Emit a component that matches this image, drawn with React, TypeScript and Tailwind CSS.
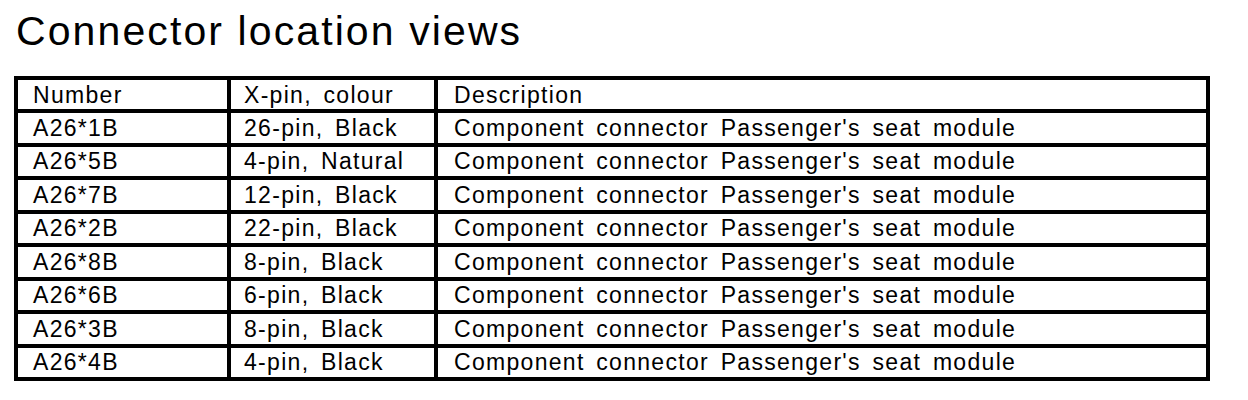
const rows = [
  { number: "A26*1B", pin: "26-pin, Black" },
  { number: "A26*5B", pin: "4-pin, Natural" },
  { number: "A26*7B", pin: "12-pin, Black" },
  { number: "A26*2B", pin: "22-pin, Black" },
  { number: "A26*8B", pin: "8-pin, Black" },
  { number: "A26*6B", pin: "6-pin, Black" },
  { number: "A26*3B", pin: "8-pin, Black" },
  { number: "A26*4B", pin: "4-pin, Black" },
];

const desc = "Component connector Passenger's seat module";

// Connector location table
export default function App() {
  return (
    <div className="w-[1248px] h-[400px] bg-white text-black font-['Liberation_Sans',Arial,sans-serif]">
      <h1 className="pl-[16px] pt-[9px] text-[41px] leading-[44px] tracking-[2.1px]">
        Connector location views
      </h1>
      <table className="ml-[14px] mt-[23px] w-[1196px] border-collapse border-4 border-black text-[23px] tracking-[1.3px] [word-spacing:4px]">
        <colgroup>
          <col className="w-[213px]" />
          <col className="w-[207px]" />
          <col />
        </colgroup>
        <thead>
          <tr className="h-[33px]">
            <th className="border-4 border-black px-[15px] pt-[1px] text-left font-normal leading-none">Number</th>
            <th className="border-4 border-black px-[13px] pt-[1px] text-left font-normal leading-none">X-pin, colour</th>
            <th className="border-4 border-black px-[16px] pt-[1px] text-left font-normal leading-none">Description</th>
          </tr>
        </thead>
        <tbody>
          {rows.map((r) => (
            <tr key={r.number} className="h-[33.5px]">
              <td className="border-4 border-black px-[15px] pt-[1px] leading-none">{r.number}</td>
              <td className="border-4 border-black px-[13px] pt-[1px] leading-none">{r.pin}</td>
              <td className="border-4 border-black px-[16px] pt-[1px] leading-none">{desc}</td>
            </tr>
          ))}
        </tbody>
      </table>
    </div>
  );
}
